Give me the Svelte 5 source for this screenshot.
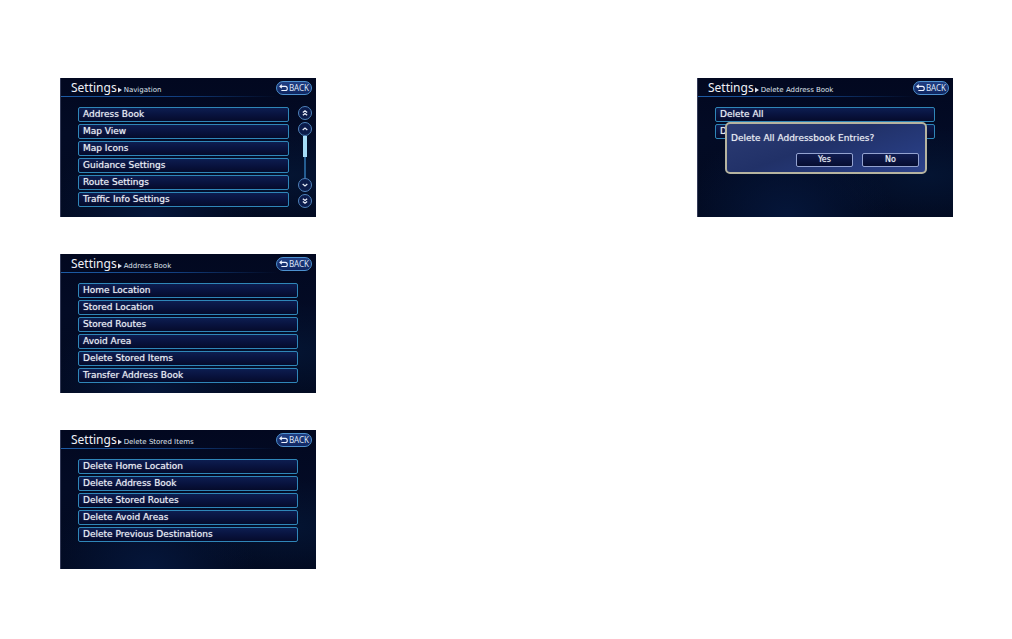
<script>
  const screens = [
    {
      title: 'Navigation',
      scroll: true,
      items: ['Address Book', 'Map View', 'Map Icons', 'Guidance Settings', 'Route Settings', 'Traffic Info Settings'],
    },
    {
      title: 'Address Book',
      items: ['Home Location', 'Stored Location', 'Stored Routes', 'Avoid Area', 'Delete Stored Items', 'Transfer Address Book'],
    },
    {
      title: 'Delete Stored Items',
      items: ['Delete Home Location', 'Delete Address Book', 'Delete Stored Routes', 'Delete Avoid Areas', 'Delete Previous Destinations'],
    },
  ];
  const confirmScreen = { title: 'Delete Address Book', items: ['Delete All', 'D'], dialog: true };
</script>

{#snippet arrow(label, d)}
  <button class="arrow" aria-label={label}>
    <svg viewBox="0 0 14 14" fill="none" stroke="#e8edf8" stroke-width="1.4"><path {d} /></svg>
  </button>
{/snippet}

{#snippet panel(s)}
  <section class="screen">
    <header>
      <h2>Settings</h2>
      <svg class="crumb" viewBox="0 0 4 6"><path d="M0 0.5 4 3 0 5.5Z" fill="#dfe4ee" /></svg>
      <span class="sub">{s.title}</span>
      <button class="back">
        <svg viewBox="0 0 10 8" fill="none" stroke="#eef3ff" stroke-width="1.2">
          <path d="M3.2 0.3 1 2.2 3.2 4.1M1 2.2H7.2Q9.2 2.2 9.2 4.5T7.2 6.8H2.6" />
        </svg>
        BACK
      </button>
    </header>
    <div class="body">
      <ul>
        {#each s.items as item}
          <li><button class="row">{item}</button></li>
        {/each}
      </ul>
      {#if s.scroll}
        <div class="scroll">
          {@render arrow('Page up', 'M4.5 6.5 7 4.3 9.5 6.5M4.5 9.7 7 7.5 9.5 9.7')}
          {@render arrow('Up', 'M4.3 8.2 7 5.8 9.7 8.2')}
          <div class="track"><div class="thumb"></div></div>
          {@render arrow('Down', 'M4.3 5.8 7 8.2 9.7 5.8')}
          {@render arrow('Page down', 'M4.5 4.3 7 6.5 9.5 4.3M4.5 7.5 7 9.7 9.5 7.5')}
        </div>
      {/if}
    </div>
    {#if s.dialog}
      <div class="dialog" role="dialog" aria-labelledby="question">
        <p id="question">Delete All Addressbook Entries?</p>
        <div class="actions">
          <button>Yes</button>
          <button>No</button>
        </div>
      </div>
    {/if}
  </section>
{/snippet}

<main>
  <div class="column">
    {#each screens as s}
      {@render panel(s)}
    {/each}
  </div>
  <div class="column last">
    {@render panel(confirmScreen)}
  </div>
</main>

<style>
  :global(body) {
    margin: 0;
    background: #fff;
  }
  main {
    display: grid;
    grid-template-columns: minmax(256px, 2fr) 3fr minmax(256px, 2fr);
    align-items: start;
    padding: 78px 59px 60px 60px;
    font-family: "DejaVu Sans", Verdana, sans-serif;
  }
  .column {
    display: flex;
    flex-direction: column;
    gap: 37px;
  }
  .last {
    grid-column: 3;
  }
  button {
    box-sizing: border-box;
    margin: 0;
    padding: 0;
    font: inherit;
    color: inherit;
    cursor: pointer;
  }
  .screen {
    position: relative;
    box-sizing: border-box;
    min-height: 139px;
    color: #eef0f5;
    border-left: 1px solid #343b58;
    background:
      radial-gradient(ellipse at 35% 100%, #05163a 0, transparent 45%),
      radial-gradient(ellipse at 90% 70%, #041432 0, transparent 35%),
      linear-gradient(#020820, #030b25 40%, #020a20);
  }
  header {
    position: relative;
    display: flex;
    align-items: center;
    height: 19px;
    padding: 0 4px 0 10px;
    background: linear-gradient(90deg, #1d5ca6, #123f80 45%, transparent 85%) left bottom / 100% 1px no-repeat;
  }
  h2 {
    margin: 0;
    font: 400 12px/18px "Noto Sans", sans-serif;
  }
  .crumb {
    width: 4px;
    height: 6px;
    margin: 4px 2px 0 1px;
  }
  .sub {
    padding-top: 4px;
    font-size: 7px;
    line-height: 10px;
    color: #dfe3ec;
    white-space: nowrap;
  }
  .back {
    display: flex;
    align-items: center;
    justify-content: center;
    gap: 1px;
    width: 36px;
    height: 14px;
    margin-left: auto;
    border: 1px solid #4d91cf;
    border-radius: 7px;
    background: linear-gradient(#203e83, #102661);
    font: 400 8px/12px "Noto Sans", sans-serif;
    color: #dce5f7;
  }
  .back svg {
    flex: none;
    width: 9px;
    height: 8px;
  }
  .body {
    display: flex;
    padding: 10px 4px 10px 17px;
  }
  ul {
    flex: 1;
    display: flex;
    flex-direction: column;
    gap: 2px;
    margin: 0 14px 0 0;
    padding: 0;
    list-style: none;
  }
  li {
    display: flex;
  }
  .row {
    flex: 1;
    height: 15px;
    padding: 0 4px;
    border: 1px solid #2f86b8;
    border-radius: 2px;
    background: linear-gradient(#0d1d50, #08123d 55%, #050b2b);
    font-size: 9px;
    line-height: 13px;
    text-align: left;
    white-space: nowrap;
    text-shadow: 0 0 1px #9aa5c0;
  }
  .scroll {
    display: flex;
    flex-direction: column;
    align-items: center;
    width: 14px;
    margin: -1px 0 -1px -5px;
  }
  .arrow {
    width: 14px;
    height: 14px;
    border: 1px solid #4f83bb;
    border-radius: 50%;
    background: #0b1b4b;
    display: flex;
    flex: none;
  }
  .arrow + .arrow {
    margin-top: 2px;
  }
  .arrow svg {
    width: 12px;
    height: 12px;
  }
  .track {
    flex: 1;
    width: 4px;
    background: linear-gradient(#245d91, #245d91) center / 2px 100% no-repeat;
  }
  .thumb {
    height: 50%;
    background: #a5dcf7;
  }
  .dialog {
    position: absolute;
    top: 44px;
    left: 27px;
    right: 26px;
    box-sizing: border-box;
    height: 52px;
    padding: 8px 6px 4px 4px;
    border: 2px solid #b6b4a0;
    border-radius: 5px;
    background: linear-gradient(160deg, #2c3c74, #213168 45%, #263a7c 75%, #2e438b);
  }
  .dialog p {
    margin: 0 0 8px;
    font-size: 9px;
    line-height: 13px;
    white-space: nowrap;
    text-shadow: 0 0 1px #9aa5c0;
  }
  .actions {
    display: flex;
    justify-content: flex-end;
    gap: 9px;
  }
  .actions button {
    width: 57px;
    height: 14px;
    border: 1px solid #93a2d0;
    border-radius: 2px;
    background: linear-gradient(#101c50, #060d31);
    font-size: 8px;
    line-height: 12px;
    text-shadow: 0 0 1px #9aa5c0;
  }
</style>
